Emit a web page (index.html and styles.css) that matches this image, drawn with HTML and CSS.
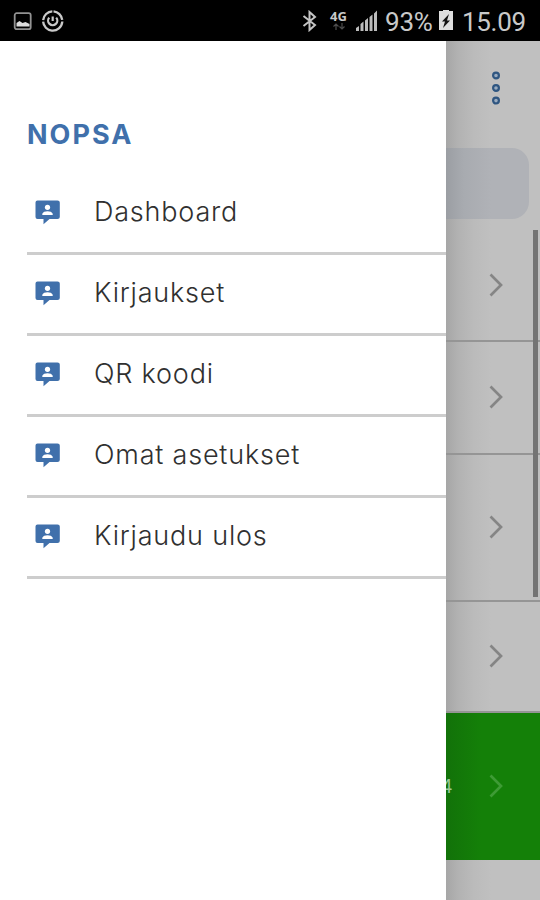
FILE: index.html
```
<!DOCTYPE html>
<html lang="fi">
<head>
<meta charset="utf-8">
<title>Nopsa</title>
<link rel="stylesheet" href="styles.css">
</head>
<body>
<svg class="defs" width="0" height="0">
  <symbol id="person" viewBox="0 0 26 26"><path fill="#4070ab" d="M2.500 .5H22.500Q24.800 .5 24.800 2.500V17Q24.800 19 22.500 19H14.500L8.500 24.300V19H2.500Q.5 19 .5 17V2.500Q.5 .5 2.500 .5Z"/><circle cx="12.500" cy="7.300" r="2.600" fill="#fff"/><path fill="#fff" d="M7.300 15V13.800C8.500 10.500 16.500 10.500 17.700 13.800V15Z"/></symbol>
  <symbol id="chevron" viewBox="0 0 14 24"><path d="M1.500 1.500 12 12 1.500 22.500" fill="none" stroke="currentColor" stroke-width="2.700"/></symbol>
</svg>
<header class="status">
  <svg class="notices" width="56" height="28" viewBox="0 0 56 28">
    <rect x="1.700" y="5.200" width="16" height="16" rx="2" fill="none" stroke="#929292" stroke-width="1.800"/>
    <path d="M3.500 18.500V15L6.500 13l3 2 3-1 4 2v2.500Z" fill="#ddd"/>
    <circle cx="39.700" cy="13" r="9.600" fill="none" stroke="#c9c9c9" stroke-width="2.300" stroke-dasharray="13 1.600 28.800 1.600 13.700 1.600" transform="rotate(-85 39.700 13)"/>
    <path d="M36.200 9.600A4.600 4.600 0 1 0 43.200 9.600M39.700 8.500V13" fill="none" stroke="#c9c9c9" stroke-width="2.200"/>
  </svg>
  <svg class="bluetooth" width="16" height="22" viewBox="0 0 16 22"><path d="M1.500 6 13 15 7.500 20V2L13 7 1.500 16" fill="none" stroke="#c4c4c4" stroke-width="2"/></svg>
  <div class="network"><span>4G</span><svg width="14" height="7" viewBox="0 0 14 7"><path d="M4 7V1M1.500 3.500 4 1 6.500 3.500M10 0V6M7.500 3.500 10 6 12.500 3.500" fill="none" stroke="#4d4d4d" stroke-width="1.200"/></svg></div>
  <svg class="signal" width="23" height="22" viewBox="0 0 23 22"><path d="M1 21V18L4 16V21ZM5.500 21V14L8.500 11.500V21ZM10 21V10.500L13 8V21ZM14.500 21V7L17.500 4.500V21ZM19 21V3.500L22 .5V21Z" fill="#bcbcbc"/></svg>
  <span class="percent">93%</span>
  <svg class="battery" width="14" height="21" viewBox="0 0 14 21"><path d="M0 1H4V0H10V1H14V20H0Z" fill="#dedede"/><path d="M10 4 3 11.500H6L4 18 11 10.500H8Z" fill="#111"/></svg>
  <span class="clock">15.09</span>
</header>
<div class="screen">
  <nav class="drawer">
    <h1>NOPSA</h1>
    <ul>
      <li><svg><use href="#person"/></svg><span>Dashboard</span></li>
      <li><svg><use href="#person"/></svg><span>Kirjaukset</span></li>
      <li><svg><use href="#person"/></svg><span>QR koodi</span></li>
      <li><svg><use href="#person"/></svg><span>Omat asetukset</span></li>
      <li><svg><use href="#person"/></svg><span>Kirjaudu ulos</span></li>
    </ul>
  </nav>
  <main class="page">
    <div class="toolbar"><svg width="10" height="34" viewBox="0 0 10 34"><g fill="#9bacc0" stroke="#2f5681" stroke-width="2.200"><circle cx="5" cy="4.500" r="2.900"/><circle cx="5" cy="17" r="2.900"/><circle cx="5" cy="29.600" r="2.900"/></g></svg></div>
    <div class="field"></div>
    <div class="row first"><svg><use href="#chevron"/></svg></div>
    <div class="row second"><svg><use href="#chevron"/></svg></div>
    <div class="row third"><svg><use href="#chevron"/></svg></div>
    <div class="row fourth"><svg><use href="#chevron"/></svg></div>
    <div class="row active"><span>4</span><svg><use href="#chevron"/></svg></div>
    <div class="scrollbar"></div>
  </main>
</div>
</body>
</html>
```
FILE: styles.css
```
* { box-sizing: border-box; }
body { margin: 0; width: 540px; height: 900px; overflow: hidden; background: #fff; font-family: Inter, sans-serif; }
.defs { display: block; width: 0; height: 0; }
.status { display: flex; align-items: flex-start; height: 41px; background: #000; color: #c9c9c9; font: 26px/30px Roboto, sans-serif; }
.status svg { display: block; flex: none; }
.notices { margin: 8px 0 0 13px; }
.bluetooth { margin: 10px 0 0 233px; }
.network { width: 19px; margin: 10px 0 0 12px; font: bold 13px/12px "Open Sans", sans-serif; }
.network svg { margin: 1px 0 0 2px; }
.signal { margin: 10px 0 0 6px; }
.percent { width: 53px; margin: 7px 0 0 7px; letter-spacing: -.2px; }
.battery { margin: 10px 0 0 1px; }
.clock { margin: 7px 0 0 9px; letter-spacing: -.3px; }
.screen { display: flex; height: 859px; }
.drawer { width: 446px; padding: 77px 0 0 27px; background: #fff; }
.drawer h1 { margin: 0; font-size: 27px; line-height: 34px; font-weight: 650; letter-spacing: 2px; color: #4070ab; }
.drawer ul { margin: 22px 0 0; padding: 0; list-style: none; }
.drawer li { display: flex; align-items: center; height: 81px; border-bottom: 3px solid #cdcdcd; color: #303030; font-size: 27px; font-weight: 300; letter-spacing: .8px; }
.drawer li span { margin-top: -3px; }
.drawer li svg { width: 26px; height: 26px; margin: 0 33px 0 8px; }
.page { position: relative; width: 94px; overflow: hidden; background: linear-gradient(90deg, #a6a6a6, #b2b2b2 12px, #bbb 28px, #c0c0c0 45px); }
.toolbar { height: 107px; padding: 30px 0 0 45px; }
.toolbar svg { display: block; }
.field { width: 83px; height: 71px; border-radius: 0 17px 17px 0; background: linear-gradient(90deg, #9b9ea3, #a8abb0 18px, #b0b2b7 45px); }
.row { display: flex; align-items: center; justify-content: flex-end; padding-right: 37px; border-bottom: 2px solid #959595; color: #858585; }
.row svg { width: 14px; height: 24px; margin-top: -1px; }
.first { height: 123px; padding-top: 12px; }
.second { height: 113px; }
.third { height: 147px; }
.fourth { height: 111px; }
.active { justify-content: space-between; height: 147px; border: 0; background: linear-gradient(90deg, #127209, #148008 35px); color: #3e9b35; }
.active span { margin-left: -5px; color: #9bc896; font-size: 18px; }
.scrollbar { position: absolute; top: 189px; right: 2px; width: 5px; height: 367px; background: #747474; }
```
